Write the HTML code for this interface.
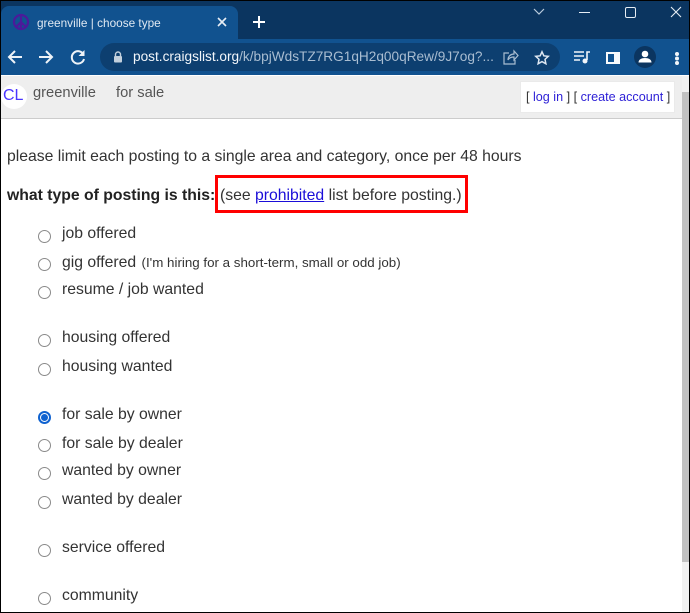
<!DOCTYPE html>
<html><head><meta charset="utf-8"><style>
html,body{margin:0;padding:0;background:#000}
body{width:690px;height:613px;position:relative;overflow:hidden;font-family:"Liberation Sans",sans-serif}
div,a,span,svg{position:absolute}
a span,b,i{position:static}
.t{white-space:nowrap;color:#333;font-size:15.76px;line-height:20px}
.r{left:38px;width:13px;height:13px;border-radius:50%;border:1px solid #8a8a8a;box-sizing:border-box;background:#fff}
</style></head><body>
<div style="left:1px;top:1px;width:688px;height:611px;background:#fff;overflow:hidden"></div>
<div style="left:1px;top:1px;width:688px;height:38px;background:#0b3560"></div>
<div style="left:1px;top:6px;width:237px;height:34px;background:#11528f;border-radius:8px 8px 0 0"></div>
<div style="left:1px;top:39px;width:688px;height:36px;background:#11528f"></div>
<div style="left:100px;top:43px;width:460px;height:28px;background:#0d3f70;border-radius:14px"></div>
<svg style="left:12px;top:13px" width="18" height="18" viewBox="0 0 18 18"><circle cx="9" cy="9" r="7" fill="none" stroke="#4b1a9a" stroke-width="2.2"/><path d="M9 2v14M9 9l-5 5M9 9l5 5" stroke="#4b1a9a" stroke-width="2.2" fill="none"/></svg>
<div class="t" style="left:37px;top:13px;font-size:11.8px;color:#dfe8f2">greenville | choose type</div>
<svg style="left:216px;top:16px" width="12" height="12" viewBox="0 0 12 12"><path d="M2 2l8 8M10 2l-8 8" stroke="#e8eef5" stroke-width="1.6"/></svg>
<svg style="left:252px;top:15px" width="14" height="14" viewBox="0 0 14 14"><path d="M7 1v12M1 7h12" stroke="#fff" stroke-width="2"/></svg>
<svg style="left:532px;top:7px" width="14" height="10" viewBox="0 0 14 10"><path d="M2 2l5 5 5-5" stroke="#b9cbdd" stroke-width="1.2" fill="none"/></svg>
<div style="left:579px;top:12px;width:11px;height:1px;background:#e6edf4"></div>
<div style="left:625px;top:7px;width:9px;height:9px;border:1px solid #e6edf4;border-radius:2px"></div>
<svg style="left:670px;top:6px" width="12" height="12" viewBox="0 0 12 12"><path d="M1 1l10 10M11 1L1 11" stroke="#e6edf4" stroke-width="1.1"/></svg>
<svg style="left:6px;top:48px" width="18" height="18" viewBox="0 0 18 18"><path d="M16 9H3M9 3L3 9l6 6" stroke="#eef3f8" stroke-width="2" fill="none"/></svg>
<svg style="left:37px;top:48px" width="18" height="18" viewBox="0 0 18 18"><path d="M2 9h13M9 3l6 6-6 6" stroke="#eef3f8" stroke-width="2" fill="none"/></svg>
<svg style="left:69px;top:48px" width="18" height="18" viewBox="0 0 18 18"><path d="M14.5 6.5A6.2 6.2 0 1 0 15 11" stroke="#eef3f8" stroke-width="2" fill="none"/><path d="M15.5 2v6h-6z" fill="#eef3f8"/></svg>
<svg style="left:112px;top:50px" width="12" height="14" viewBox="0 0 12 14"><path d="M3.5 6V4.5a2.5 2.5 0 0 1 5 0V6" stroke="#c3d0dd" stroke-width="1.4" fill="none"/><rect x="2" y="6" width="8" height="6.500" rx="1" fill="#c3d0dd"/></svg>
<div class="t" style="left:133px;top:47px;width:362px;overflow:hidden;font-size:13.65px;color:#f2f6fa">post.craigslist.org<span style="position:static;color:#a9bdd1">/k/bpjWdsTZ7RG1qH2q00qRew/9J7og?...</span></div>
<svg style="left:502px;top:49px" width="17" height="17" viewBox="0 0 17 17"><path d="M7 4H2v11h11v-4M6 11c0-4 3-6 6-6V2l4 4.500-4 4.500V8c-3 0-5 1-6 3z" stroke="#a9bdd1" stroke-width="1.2" fill="none"/></svg>
<svg style="left:534px;top:50px" width="16" height="15" viewBox="0 0 18 17"><path d="M9 2l2.100 4.600 5 .6-3.700 3.400 1 5L9 13.100 4.600 15.600l1-5L1.900 7.200l5-.6z" stroke="#dfe8f2" stroke-width="1.700" fill="none"/></svg>
<svg style="left:573px;top:50px" width="18" height="14" viewBox="0 0 18 14"><path d="M1 2h10M1 6h10M1 10h6" stroke="#f2f6fa" stroke-width="1.600"/><path d="M14 10V2h3" stroke="#f2f6fa" stroke-width="1.600" fill="none"/><circle cx="12" cy="11" r="2.500" fill="#f2f6fa"/></svg>
<div style="left:606px;top:52px;width:14px;height:12px;background:#11528f;box-shadow:inset 0 0 0 2px #f8fafc"></div>
<div style="left:614px;top:52px;width:6px;height:12px;background:#f8fafc"></div>
<div style="left:634px;top:46px;width:22px;height:22px;border-radius:50%;background:#0b3560"></div>
<svg style="left:634px;top:46px" width="22" height="22" viewBox="0 0 22 22"><circle cx="11" cy="8" r="3.300" fill="#fff"/><path d="M4.500 16.500c0-3 3-4.500 6.500-4.500s6.500 1.500 6.500 4.500z" fill="#fff"/></svg>
<div style="left:675px;top:52px;width:4px;height:4px;border-radius:50%;background:#f2f6fa;box-shadow:0 4.500px 0 #f2f6fa,0 9px 0 #f2f6fa"></div>

<div style="left:1px;top:76px;width:681px;height:42px;background:#eee;border-bottom:1px solid #ccc"></div>
<div style="left:1px;top:84px;width:26px;height:25px;border-radius:50%;background:#fff"></div>
<div class="t" style="left:3px;top:86px;color:#4a35ff;font-size:16px">CL</div>
<div class="t" style="left:33px;top:83px;font-size:14.7px;color:#555">greenville</div>
<div class="t" style="left:116px;top:83px;font-size:14.7px;color:#555">for sale</div>
<div style="left:520px;top:81px;width:155px;height:32px;background:#fff;border:1px solid #eaeaea;box-sizing:border-box"></div>
<div class="t" style="left:526px;top:87px;font-size:12.6px;color:#333">[ <a style="position:static;color:#2c1fd6;text-decoration:none">log in</a> ] [ <a style="position:static;color:#2c1fd6;text-decoration:none">create account</a> ]</div>
<div style="left:682px;top:76px;width:7px;height:536px;background:#f1f1f1"></div>
<div style="left:682px;top:92px;width:7px;height:470px;background:#c1c1c1"></div>

<div class="t" style="left:7px;top:147px">please limit each posting to a single area and category, once per 48 hours</div>
<div class="t" style="left:7px;top:186px"><b style="color:#222">what type of posting is this:</b></div>
<div style="left:215px;top:175px;width:253px;height:38px;border:3px solid #f00;box-sizing:border-box"></div>
<div class="t" style="left:220px;top:186px">(see <a style="position:static;color:#1a0dd8;text-decoration:underline">prohibited</a> list before posting.)</div>

<div class="r" style="top:230px"></div><div class="t" style="left:62px;top:224px">job offered</div>
<div class="r" style="top:258px"></div><div class="t" style="left:62px;top:253px">gig offered <span style="position:static;font-size:13.35px;margin-left:1px">(I'm hiring for a short-term, small or odd job)</span></div>
<div class="r" style="top:286px"></div><div class="t" style="left:62px;top:280px">resume / job wanted</div>
<div class="r" style="top:334px"></div><div class="t" style="left:62px;top:328px">housing offered</div>
<div class="r" style="top:363px"></div><div class="t" style="left:62px;top:357px">housing wanted</div>
<div class="r" style="top:411px;border:2px solid #0f62d0"></div><div style="left:41px;top:414px;width:7px;height:7px;border-radius:50%;background:#0f62d0"></div><div class="t" style="left:62px;top:405px">for sale by owner</div>
<div class="r" style="top:439px"></div><div class="t" style="left:62px;top:434px">for sale by dealer</div>
<div class="r" style="top:467px"></div><div class="t" style="left:62px;top:461px">wanted by owner</div>
<div class="r" style="top:496px"></div><div class="t" style="left:62px;top:490px">wanted by dealer</div>
<div class="r" style="top:544px"></div><div class="t" style="left:62px;top:538px">service offered</div>
<div class="r" style="top:592px"></div><div class="t" style="left:62px;top:586px">community</div>
</body></html>
